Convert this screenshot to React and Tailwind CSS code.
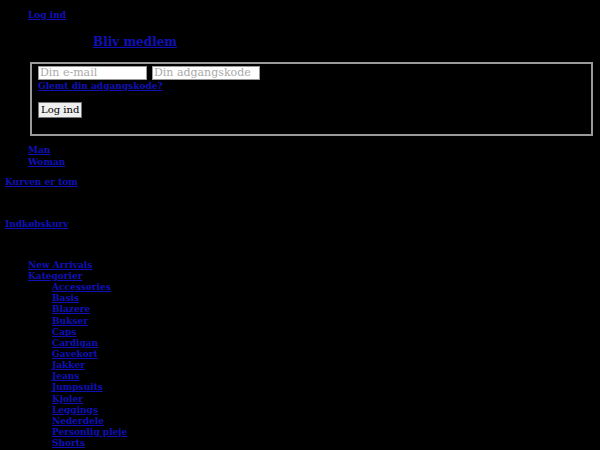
const link = "text-[#1010b8] underline font-bold";

const kategorier = [
  "Accessories",
  "Basis",
  "Blazere",
  "Bukser",
  "Caps",
  "Cardigan",
  "Gavekort",
  "Jakker",
  "Jeans",
  "Jumpsuits",
  "Kjoler",
  "Leggings",
  "Nederdele",
  "Personlig pleje",
  "Shorts",
  "Skjorter",
  "Sko",
];

export default function App() {
  return (
    <div className="bg-black h-[450px] overflow-hidden text-[9px] leading-[11.15px] font-['DejaVu_Serif',serif]">
      <div className="pt-[9.5px] pl-[28px]">
        <a href="#" className={link}>Log ind</a>
      </div>

      <div className="pl-[93px] mt-[14.8px] text-[12px] leading-[15px]">
        <a href="#" className={link}>Bliv medlem</a>
      </div>

      <div className="mt-[11.5px] ml-[30px] mr-[7px] h-[74px] border-2 border-[#9a9a9a] pl-[6px] pt-[2px]">
        <div className="flex gap-[5px]">
          <input
            placeholder="Din e-mail"
            className="w-[109px] h-[14px] bg-white border border-[#999] px-[1px] text-[11px] placeholder:text-[#aaa] font-['DejaVu_Serif',serif] outline-none"
          />
          <input
            placeholder="Din adgangskode"
            className="w-[108px] h-[14px] bg-white border border-[#999] px-[1px] text-[11px] placeholder:text-[#aaa] font-['DejaVu_Serif',serif] outline-none"
          />
        </div>
        <div className="mt-[1px]">
          <a href="#" className={link}>Glemt din adgangskode?</a>
        </div>
        <button className="mt-[10px] h-[16px] px-[2px] bg-[#efefef] border border-[#777] text-black text-[10px] leading-[12px]">
          Log ind
        </button>
      </div>

      <ul className="pl-[28px] mt-[9.5px]">
        <li><a href="#" className={link}>Man</a></li>
        <li><a href="#" className={link}>Woman</a></li>
      </ul>

      <div className="pl-[5px] mt-[9.7px]">
        <a href="#" className={link}>Kurven er tom</a>
      </div>

      <div className="pl-[5px] mt-[30px]">
        <a href="#" className={link}>Indkøbskurv</a>
      </div>

      <ul className="pl-[28px] mt-[30px]">
        <li><a href="#" className={link}>New Arrivals</a></li>
        <li>
          <a href="#" className={link}>Kategorier</a>
          <ul className="pl-[24px]">
            {kategorier.map((k) => (
              <li key={k}><a href="#" className={link}>{k}</a></li>
            ))}
          </ul>
        </li>
      </ul>
    </div>
  );
}
